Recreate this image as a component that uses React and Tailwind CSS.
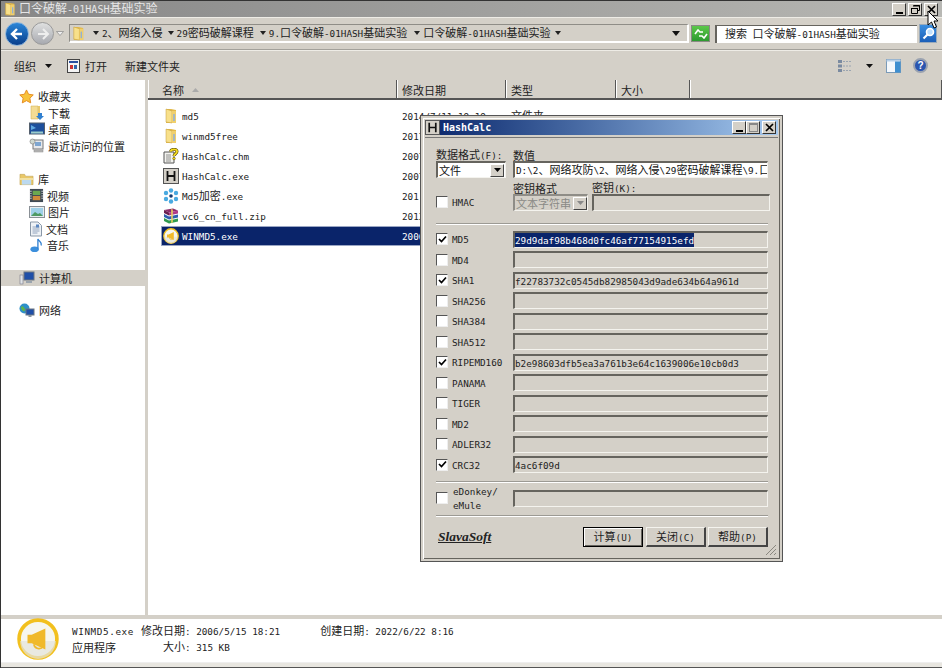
import React from "react";

const T = ({ children, className = "" }) => {
  const parts = String(children).split(/([\u2E80-\uFFFF]+)/).filter(Boolean);
  return (
    <span className={"whitespace-pre leading-[12px] " + className}>
      {parts.map((p, i) =>
        /[\u2E80-\uFFFF]/.test(p) ? (
          <span key={i} className="text-[11px] font-['Noto_Sans_CJK_SC',sans-serif]">{p}</span>
        ) : (
          <span key={i} className="text-[9.3px] font-['DejaVu_Sans_Mono',monospace]">{p}</span>
        )
      )}
    </span>
  );
};

const Folder = ({ s = 16 }) => (
  <svg width={s} height={s} viewBox="0 0 16 16" className="shrink-0">
    <path d="M3 1h5l5 1v13H3z" fill="#e2b94a" />
    <path d="M3 1l6 2v12l-6-1z" fill="#f8e08a" stroke="#c29a38" strokeWidth="0.5" />
    <path d="M9 3h4v12H9z" fill="#f0cf6c" />
    <path d="M11 6v7" stroke="#8fb0d8" strokeWidth="1.5" />
  </svg>
);

const Tri = ({ className = "" }) => (
  <svg width="6" height="4" viewBox="0 0 6 4" className={"shrink-0 " + className}><path d="M0 0h6L3 4z" fill="#222" /></svg>
);

const SideItem = ({ icon, label, deep, className = "" }) => (
  <div className={"flex items-center h-[16.5px] " + (deep ? "pl-[28px] gap-[3px] " : "pl-[18px] gap-[4px] ") + className}>
    {icon}
    <T className="text-[#222]">{label}</T>
  </div>
);

const Star = () => (
  <svg width="15" height="15" viewBox="0 0 16 16"><path d="M8 1l2.200 4.600 5 .7-3.600 3.500.9 5L8 12.400l-4.500 2.400.9-5L.8 6.300l5-.7z" fill="#f8c33c" stroke="#e58a1f" strokeWidth="1" /></svg>
);
const Dl = () => (
  <svg width="16" height="16" viewBox="0 0 16 16"><path d="M2 1h7v13H2z" fill="#f3dc94" stroke="#c9a94f" strokeWidth=".5" /><path d="M9 1h2v13H9z" fill="#e7c86d" /><path d="M9 8h4v3h2l-4 4-4-4h2z" fill="#2f7fd0" /></svg>
);
const Desk = () => (
  <svg width="16" height="14" viewBox="0 0 16 14"><rect x="0.500" y="1" width="15" height="11" fill="#1d4f9c" stroke="#55606e" /><rect x="2" y="9.500" width="12" height="2" fill="#9cc" /><path d="M2 3l5 3-5 2z" fill="#5fa8e0" /></svg>
);
const Recent = () => (
  <svg width="16" height="16" viewBox="0 0 16 16"><rect x="4" y="2" width="10" height="9" fill="#e6e8ea" stroke="#777" /><rect x="6" y="4" width="6" height="4" fill="#7ea6d0" /><rect x="5" y="12" width="9" height="2" fill="#bbb" stroke="#888" strokeWidth=".5" /><circle cx="3.500" cy="3.500" r="2.500" fill="#cfd8cf" stroke="#777" strokeWidth=".6" /></svg>
);
const Lib = () => (
  <svg width="15" height="14" viewBox="0 0 16 14"><path d="M1 2h5l1 2h8v9H1z" fill="#e9c868" stroke="#b8994a" strokeWidth=".5" /><path d="M3 6h10v7H3z" fill="#bcd9ef" /><path d="M1 6h14v2H1z" fill="#f5e2a0" /></svg>
);
const Video = () => (
  <svg width="15" height="15" viewBox="0 0 16 16"><rect x="1" y="1" width="14" height="14" fill="#3f4a55" /><rect x="4" y="3" width="8" height="4.500" fill="#6ba84f" /><rect x="4" y="8.500" width="8" height="4.500" fill="#d08a3a" /><path d="M2 3v10M14 3v10" stroke="#ddd" strokeDasharray="1 1.500" strokeWidth="1.500" /></svg>
);
const Pic = () => (
  <svg width="16" height="14" viewBox="0 0 16 14"><rect x="0.500" y="1.500" width="15" height="11" fill="#e8ecef" stroke="#8a9096" /><rect x="2" y="3" width="12" height="8" fill="#9fd0e8" /><path d="M2 11l4-4 3 2 2-1 3 3z" fill="#4f9a63" /></svg>
);
const Doc = () => (
  <svg width="14" height="16" viewBox="0 0 14 16"><path d="M1.500 1H9l3.500 3.500V15h-11z" fill="#eef2f6" stroke="#8a98a8" /><path d="M3.500 6h7M3.500 8h7M3.500 10h7M3.500 12h5" stroke="#7a90b0" strokeWidth=".8" /><rect x="7" y="3.500" width="3" height="3" fill="#5a86c0" /></svg>
);
const Music = () => (
  <svg width="15" height="16" viewBox="0 0 16 16"><ellipse cx="6" cy="12.500" rx="4.500" ry="3" fill="#3c8fdc" /><path d="M9.500 12V1.500c1 3 4.500 3 3.500 7" fill="none" stroke="#2f7fd0" strokeWidth="1.400" /></svg>
);
const Computer = () => (
  <svg width="16" height="14" viewBox="0 0 16 14"><rect x="5" y="1" width="10" height="8" fill="#1f4fa8" stroke="#6a7480" /><rect x="7" y="10" width="6" height="2" fill="#9aa4ae" /><rect x="1" y="4" width="3" height="9" fill="#e0e4e8" stroke="#778" strokeWidth=".6" /></svg>
);
const Network = () => (
  <svg width="16" height="15" viewBox="0 0 16 15"><circle cx="5.500" cy="5.500" r="5" fill="#2d8fc9" /><path d="M2 4c2-2 3 1 4 2s-1 3-2 2-2-2-2-4z" fill="#5fb54a" /><rect x="7" y="6" width="8" height="6" fill="#1f4fa8" stroke="#6a7480" /><rect x="9.500" y="12" width="3" height="2" fill="#8a96a2" /></svg>
);

const Chm = () => (
  <svg width="16" height="16" viewBox="0 0 16 16" className="shrink-0"><path d="M1 4h10v11H1z" fill="#f3f3ef" stroke="#555" /><path d="M3 7h5M3 9h5M3 11h5M3 13h5" stroke="#777" strokeWidth=".8" /><path d="M7.500 3.500C8 .8 14 .5 14 3.500c0 2.200-3 2.200-3 4.500" fill="none" stroke="#5a4a00" strokeWidth="3" /><path d="M7.500 3.500C8 .8 14 .5 14 3.500c0 2.200-3 2.200-3 4.500" fill="none" stroke="#f5dc20" strokeWidth="1.800" /><circle cx="11" cy="10.500" r="1.300" fill="#f5dc20" stroke="#5a4a00" strokeWidth=".5" /></svg>
);
const HIcon = ({ s = 16 }) => (
  <svg width={s} height={s} viewBox="0 0 16 16" className="shrink-0"><rect x="0.500" y="0.500" width="15" height="15" fill="#d4d0c8" stroke="#555" /><path d="M4.500 3v10M11.500 3v10M4.500 8h7" stroke="#111" strokeWidth="1.800" fill="none" /></svg>
);
const Snow = () => (
  <svg width="16" height="16" viewBox="0 0 16 16" className="shrink-0">
    <g fill="#49a9e0">
      <circle cx="8" cy="2.500" r="2.200" />
      <circle cx="8" cy="13.500" r="2.200" />
      <circle cx="3" cy="5" r="2.200" />
      <circle cx="13" cy="5" r="2.200" />
      <circle cx="3" cy="11" r="2.200" />
      <circle cx="13" cy="11" r="2.200" />
    </g>
    <circle cx="8" cy="8" r="3" fill="#fff" />
    <circle cx="8" cy="8" r="1.800" fill="#123a70" />
  </svg>
);
const Rar = () => (
  <svg width="16" height="16" viewBox="0 0 16 16" className="shrink-0"><path d="M1 2l9-1.500 5 2-9 2z" fill="#8c2a6a" /><path d="M1 2l5 2.500v3L1 5z" fill="#6a1f50" /><path d="M6 4.500l9-2v3l-9 2z" fill="#b03a88" /><path d="M1 6l5 2.500 9-2v3l-9 2-5-2.500z" fill="#2f5fb0" /><path d="M1 10l5 2.500 9-2v3l-9 2-5-2.500z" fill="#2f9a4f" /><path d="M8 1l2 .5v13l-2 .5z" fill="#e8d060" opacity=".8" /></svg>
);
const Winmd = ({ s = 16 }) => (
  <svg width={s} height={s} viewBox="0 0 40 40" className="shrink-0">
    <circle cx="20" cy="20" r="18" fill="#f6f6ee" stroke="#f2c01e" strokeWidth="3.500" />
    <path d="M3 22a17 17 0 0 0 34 0z" fill="#e4e4dc" opacity=".7" />
    <path d="M10 16h4l13-6v20l-13-6h-4z" fill="#f0b92a" />
    <path d="M16 25a5 5 0 0 0 9 2" fill="none" stroke="#f0b92a" strokeWidth="1.500" />
  </svg>
);

const Row = ({ icon, name, date, type, selected }) => (
  <div className={"flex items-center h-5 w-[300px] " + (selected ? "bg-[#0a246a] outline outline-1 -outline-offset-1 outline-[#9aa6c4] text-white" : "text-[#222]")}>
    <div className="flex items-center gap-[3px] w-[241px] shrink-0 pl-[2px]">
      {icon}
      <T>{name}</T>
    </div>
    <div className="w-[109px] shrink-0 -mt-[2px]"><T>{date}</T></div>
    <div className="shrink-0 -mt-[2px]"><T>{type}</T></div>
  </div>
);

const Head = ({ w, children, grow }) => (
  <div className={"flex items-center h-full pl-[5px] pt-px gap-2 border-r border-r-[#555] shadow-[inset_1px_0_0_#fff] " + (grow ? "grow " : "") + w}>
    {children}
  </div>
);

const Check = ({ on }) => (
  <div className="w-[12px] h-[12px] bg-white border-t border-l border-t-[#555] border-l-[#555] border-b border-r border-b-[#eee] border-r-[#eee] flex items-center justify-center shrink-0">
    {on && (
      <svg width="9" height="9" viewBox="0 0 9 9"><path d="M1 4l2.500 2.500L8 1.500" fill="none" stroke="#000" strokeWidth="1.700" /></svg>
    )}
  </div>
);

const Field = ({ children, className = "" }) => (
  <div className={"h-[17px] border-t-2 border-l-2 border-t-[#66645e] border-l-[#66645e] border-b border-r border-b-[#f4f3ee] border-r-[#f4f3ee] bg-[#d4d0c8] flex items-center overflow-hidden text-[#222] " + className}>
    {children}
  </div>
);

const Algo = ({ name, on, value, selected }) => (
  <div className="flex items-center h-[20.500px]">
    <div className="w-[77px] flex items-center gap-[4px]">
      <Check on={on} />
      <T className="text-[#222]">{name}</T>
    </div>
    <Field className="w-[255px]">
      {selected ? <span className="bg-[#0a246a] text-white leading-[14px] flex items-center"><T>{value}</T></span> : value ? <T>{value}</T> : null}
    </Field>
  </div>
);

const Btn = ({ children, active }) => (
  <div className={"h-[20px] w-[60px] flex items-center justify-center bg-[#d4d0c8] " + (active ? "border border-black shadow-[inset_1px_1px_0_#fff,inset_-1px_-1px_0_#66645e]" : "border-t border-l border-t-[#f4f3ee] border-l-[#f4f3ee] border-b-2 border-r-2 border-b-[#444] border-r-[#444]")}>
    <T className="text-[#222]">{children}</T>
  </div>
);

const Sep = () => <div className="h-[2px] border-t border-[#9c9a94] bg-white w-[332px]" />;

const WinBtn = ({ children, className = "" }) => (
  <div className={"w-[14px] h-[13px] flex items-center justify-center bg-[#d4d0c8] border-t border-l border-t-white border-l-white border-b border-r border-b-[#333] border-r-[#333] " + className}>
    {children}
  </div>
);

export default function App() {
  return (
    <div className="relative w-[942px] h-[668px] overflow-hidden flex flex-col bg-[#d4d0c8] border-l border-t border-[#333] font-['DejaVu_Sans_Mono','Noto_Sans_CJK_SC',monospace]">
      {/* title bar */}
      <div className="h-[16px] shrink-0 flex items-center pl-[2px] bg-gradient-to-r from-[#878787] to-[#b8b8b4] gap-[2px]">
        <Folder s={14} />
        <span className="whitespace-pre text-[#e6e6e6] leading-[12px]">
          <span className="text-[12px] font-['Noto_Sans_CJK_SC',sans-serif]">口令破解</span>
          <span className="text-[10.100px] font-['DejaVu_Sans_Mono',monospace]">-01HASH</span>
          <span className="text-[12px] font-['Noto_Sans_CJK_SC',sans-serif]">基础实验</span>
        </span>
        <div className="ml-auto flex gap-[2px] mr-[4px]">
          <WinBtn><div className="w-[7px] h-[2px] bg-black mt-[7px]" /></WinBtn>
          <WinBtn>
            <svg width="9" height="9" viewBox="0 0 9 9"><path d="M2.500 .5h6v5h-2M.5 3.500h6v5h-6z" fill="none" stroke="#000" /><path d="M2 1h7M0 3.500h7" stroke="#000" /></svg>
          </WinBtn>
          <WinBtn>
            <svg width="9" height="9" viewBox="0 0 9 9"><path d="M1 1l7 7M8 1L1 8" stroke="#000" strokeWidth="1.700" /></svg>
          </WinBtn>
        </div>
      </div>
      {/* address bar */}
      <div className="h-[33px] shrink-0 flex items-center pl-[4px] border-t border-[#eeece6] border-b border-b-[#a3a19b]">
        <div className="w-[24px] h-[24px] rounded-full bg-gradient-to-b from-[#2b86d8] to-[#0a3f8c] border border-[#8fb6dc] flex items-center justify-center">
          <svg width="14" height="14" viewBox="0 0 14 14"><path d="M7 2L2 7l5 5M2 7h10" fill="none" stroke="#fff" strokeWidth="2.400" /></svg>
        </div>
        <div className="ml-[2px] w-[23px] h-[23px] rounded-full bg-gradient-to-b from-[#dfe0e0] to-[#a8aab0] border border-[#9a9a9a] flex items-center justify-center">
          <svg width="14" height="14" viewBox="0 0 14 14"><path d="M7 2l5 5-5 5M12 7H2" fill="none" stroke="#eee" strokeWidth="2" /></svg>
        </div>
        <svg width="8" height="5" viewBox="0 0 8 5" className="ml-[2px]"><path d="M.5.5h7L4 4.500z" fill="#eee" stroke="#888" strokeWidth=".7" /></svg>
        <div className="ml-[5px] w-[620px] h-[19px] flex items-center pl-[1px] border-t border-l border-t-[#8f8d87] border-l-[#8f8d87] border-b-2 border-r-2 border-b-white border-r-white">
          <Folder s={15} />
          <div className="flex items-center text-[#222]">
            <Tri className="ml-[7px]" />
            <T className="ml-[3px]">2、网络入侵</T>
            <Tri className="ml-[5px]" />
            <T className="ml-[3px]">29密码破解课程</T>
            <Tri className="ml-[6px]" />
            <T className="ml-[3px]">9.口令破解-01HASH基础实验</T>
            <Tri className="ml-[7px]" />
            <T className="ml-[3px]">口令破解-01HASH基础实验</T>
            <Tri className="ml-[5px]" />
          </div>
          <svg width="8" height="5" viewBox="0 0 8 5" className="ml-auto mr-[7px]"><path d="M0 0h8L4 5z" fill="#111" /></svg>
        </div>
        <div className="w-[19px] h-[17px] ml-[2px] bg-gradient-to-b from-[#5cc84a] to-[#2c9a30] border border-[#8a8a84] flex items-center justify-center">
          <svg width="14" height="10" viewBox="0 0 14 10"><path d="M1 5l3-4 2 2h3M13 5l-3 4-2-2H5" fill="none" stroke="#fff" strokeWidth="1.600" /></svg>
        </div>
        <div className="ml-[5px] w-[202px] h-[18px] bg-white border-l-2 border-t border-l-[#66645e] border-t-[#66645e] flex items-center pl-[8px] text-[#222]">
          <T>搜索 口令破解-01HASH基础实验</T>
        </div>
        <div className="ml-[2px] w-[18px] h-[19px] bg-gradient-to-b from-[#3a8ee0] to-[#1c5fb8] border border-[#9ab] flex items-center justify-center">
          <svg width="13" height="13" viewBox="0 0 13 13"><circle cx="8" cy="5" r="3.500" fill="#bfe0ff" stroke="#fff" strokeWidth="1.600" /><path d="M5.500 7.500L1.500 11.500" stroke="#fff" strokeWidth="2.200" /></svg>
        </div>
      </div>
      {/* toolbar */}
      <div className="h-[30px] shrink-0 flex items-center pl-[13px] text-[#222] border-t border-[#eeece6]">
        <T>组织</T>
        <svg width="7" height="4" viewBox="0 0 7 4" className="ml-[9px]"><path d="M0 0h7L3.500 4z" fill="#111" /></svg>
        <svg width="13" height="14" viewBox="0 0 13 14" className="ml-[15px]"><rect x="0.500" y="0.500" width="12" height="13" fill="#f4f4f4" stroke="#444" /><rect x="2" y="2" width="9" height="2" fill="#2a4fa0" /><rect x="3" y="6" width="3" height="4" fill="#c33" /><rect x="7" y="6" width="3" height="4" fill="#36a" /></svg>
        <T className="ml-[5px]">打开</T>
        <T className="ml-[18px]">新建文件夹</T>
        <div className="ml-auto flex items-center mr-[14px]">
          <svg width="14" height="12" viewBox="0 0 14 12"><g fill="#7a8aa0"><rect x="0" y="0" width="4" height="3" /><rect x="0" y="4.500" width="4" height="3" /><rect x="0" y="9" width="4" height="3" /></g><path d="M5 1.500h9M5 6h9M5 10.500h9" stroke="#9aa4b0" strokeDasharray="2 1" /></svg>
          <svg width="7" height="4" viewBox="0 0 7 4" className="ml-[14px]"><path d="M0 0h7L3.500 4z" fill="#111" /></svg>
          <svg width="15" height="14" viewBox="0 0 15 14" className="ml-[13px]"><rect x="0.500" y="0.500" width="14" height="13" fill="#f4f8fc" stroke="#7a9ab8" /><rect x="0.500" y="0.500" width="14" height="2" fill="#b8d0e8" /><rect x="9" y="2.500" width="5.500" height="11" fill="#3f8fd0" /></svg>
          <div className="ml-[12px] w-[15px] h-[15px] rounded-full bg-[#2a55b0] border-2 border-[#9aa2b0] text-white text-[10px] font-bold flex items-center justify-center font-['Liberation_Sans',sans-serif]">?</div>
        </div>
      </div>
      {/* main */}
      <div className="h-[535px] shrink-0 flex bg-white">
        <div className="w-[144px] shrink-0 pt-[8px] flex flex-col">
          <SideItem icon={<Star />} label="收藏夹" />
          <SideItem deep icon={<Dl />} label="下载" />
          <SideItem deep icon={<Desk />} label="桌面" />
          <SideItem deep icon={<Recent />} label="最近访问的位置" />
          <SideItem icon={<Lib />} label="库" className="mt-[17px]" />
          <SideItem deep icon={<Video />} label="视频" />
          <SideItem deep icon={<Pic />} label="图片" />
          <SideItem deep icon={<Doc />} label="文档" />
          <SideItem deep icon={<Music />} label="音乐" />
          <SideItem icon={<Computer />} label="计算机" className="mt-[16px] bg-[#d4d0c8]" />
          <SideItem icon={<Network />} label="网络" className="mt-[16px]" />
        </div>
        <div className="w-[3px] shrink-0 bg-[#d4d0c8]" />
        <div className="grow flex flex-col min-w-0 overflow-hidden">
          <div className="h-[20px] shrink-0 flex bg-[#d4d0c8] border-b-2 border-[#555] text-[#222]">
            <Head w="w-[249px]">
              <span className="ml-[9px]"><T>名称</T></span>
              <svg width="7" height="4" viewBox="0 0 7 4"><path d="M0 4h7L3.500 0z" fill="#aaa" /></svg>
            </Head>
            <Head w="w-[109px]"><T>修改日期</T></Head>
            <Head w="w-[110px]"><T>类型</T></Head>
            <Head w="w-[74px]"><T>大小</T></Head>
            <Head grow w=""></Head>
          </div>
          <div className="pl-[13px] pt-[6px] flex flex-col">
            <Row icon={<Folder />} name="md5" date="2014/7/11 19:19" type="文件夹" />
            <Row icon={<Folder />} name="winmd5free" date="2017" />
            <Row icon={<Chm />} name="HashCalc.chm" date="2007" />
            <Row icon={<HIcon />} name="HashCalc.exe" date="2007" />
            <Row icon={<Snow />} name="Md5加密.exe" date="201" />
            <Row icon={<Rar />} name="vc6_cn_full.zip" date="2013" />
            <Row selected icon={<Winmd />} name="WINMD5.exe" date="2006" />
          </div>
        </div>
      </div>
      {/* details */}
      <div className="h-[4px] shrink-0 bg-[#d4d0c8]" />
      <div className="h-[44px] shrink-0 bg-white flex items-start pl-[16px] text-[#222] border-b border-[#eee]">
        <div className="mt-[-1px]"><Winmd s={42} /></div>
        <div className="ml-[13px] mt-[4px] flex flex-col">
          <div className="flex items-center h-[16px]">
            <T className="tracking-[0.6px]">WINMD5.exe</T><T className="ml-[7px]">修改日期: 2006/5/15 18:21</T><T className="ml-[40px]">创建日期: 2022/6/22 8:16</T>
          </div>
          <div className="flex items-center h-[16px]">
            <T>应用程序</T><T className="ml-[47px]">大小: 315 KB</T>
          </div>
        </div>
      </div>
      <div className="grow bg-[#e8e6e0] border-b border-[#555]" />

      {/* dialog */}
      <div className="absolute left-[420px] top-[115px] w-[361px] h-[445px] bg-[#d4d0c8] border-2 border-[#d4d0c8] outline outline-1 outline-[#555] shadow-[inset_1px_1px_0_#fff,inset_-1px_-1px_0_#66645e] p-[2px] flex flex-col">
        <div className="h-[15px] shrink-0 flex items-center bg-gradient-to-r from-[#0a246a] to-[#a6caf0]">
          <HIcon s={15} />
          <span className="ml-[3px] text-white font-bold text-[10px] font-['DejaVu_Sans_Mono',monospace]">HashCalc</span>
          <div className="ml-auto flex mr-[2px]">
            <WinBtn><div className="w-[7px] h-[2px] bg-black mt-[7px]" /></WinBtn>
            <WinBtn><div className="w-[9px] h-[9px] border border-[#888] border-t-2" /></WinBtn>
            <WinBtn className="ml-[2px]">
              <svg width="9" height="9" viewBox="0 0 9 9"><path d="M1 1l7 7M8 1L1 8" stroke="#000" strokeWidth="1.700" /></svg>
            </WinBtn>
          </div>
        </div>
        <div className="h-[3px] mt-[2px] border-t border-[#777] shrink-0" />
        <div className="pl-[11px] pt-[8px] flex flex-col grow relative">
          {/* data format and value */}
          <div className="flex gap-[7px]">
            <div className="w-[70px] flex flex-col">
              <div className="h-[13px] flex items-center"><T className="text-[#222]">数据格式(F):</T></div>
              <div className="h-[17px] bg-white border-t-2 border-l-2 border-t-[#66645e] border-l-[#66645e] border-b border-r border-b-[#f4f3ee] border-r-[#f4f3ee] flex items-center pl-[1px] justify-between text-[#111]">
                <T>文件</T>
                <div className="w-[14px] h-[13px] mr-px bg-[#d4d0c8] border border-t-white border-l-white border-b-[#444] border-r-[#444] flex items-center justify-center">
                  <svg width="7" height="4" viewBox="0 0 7 4"><path d="M0 0h7L3.500 4z" fill="#000" /></svg>
                </div>
              </div>
            </div>
            <div className="w-[255px] flex flex-col">
              <div className="h-[13px] flex items-center"><T className="text-[#222] underline">数值</T></div>
              <div className="h-[17px] bg-white border-t-2 border-l-2 border-t-[#66645e] border-l-[#66645e] border-b border-r border-b-[#f4f3ee] border-r-[#f4f3ee] flex items-center pl-[1px] overflow-hidden text-[#111]">
                <T>D:\2、网络攻防\2、网络入侵\29密码破解课程\9.口</T>
              </div>
            </div>
          </div>
          {/* HMAC */}
          <div className="flex mt-[3px] h-[38px]">
            <div className="w-[77px] flex items-center gap-[4px] mt-[4px]">
              <Check />
              <T className="text-[#222]">HMAC</T>
            </div>
            <div className="w-[75px] mr-[4px] flex flex-col">
              <div className="h-[13px] flex items-center"><T className="text-[#222] underline">密钥格式</T></div>
              <div className="h-[17px] w-[75px] bg-[#d4d0c8] border-t-2 border-l-2 border-t-[#8f8d87] border-l-[#8f8d87] border-b border-r border-b-[#f4f3ee] border-r-[#f4f3ee] flex items-center pl-[1px] justify-between">
                <T className="text-[#8a8a86]">文本字符串</T>
                <div className="w-[14px] h-[13px] bg-[#d4d0c8] border border-t-white border-l-white border-b-[#444] border-r-[#444] flex items-center justify-center">
                  <svg width="7" height="4" viewBox="0 0 7 4"><path d="M0 0h7L3.500 4z" fill="#888" /></svg>
                </div>
              </div>
            </div>
            <div className="w-[178px] flex flex-col">
              <div className="h-[13px] flex items-center"><T className="text-[#222]">密钥(K):</T></div>
              <Field className="w-[178px]" />
            </div>
          </div>
          <div className="mt-[4px] mb-[4px]"><Sep /></div>
          <Algo name="MD5" on selected value="29d9daf98b468d0fc46af77154915efd" />
          <Algo name="MD4" />
          <Algo name="SHA1" on value="f22783732c0545db82985043d9ade634b64a961d" />
          <Algo name="SHA256" />
          <Algo name="SHA384" />
          <Algo name="SHA512" />
          <Algo name="RIPEMD160" on value="b2e98603dfb5ea3a761b3e64c1639006e10cb0d3" />
          <Algo name="PANAMA" />
          <Algo name="TIGER" />
          <Algo name="MD2" />
          <Algo name="ADLER32" />
          <Algo name="CRC32" on value="4ac6f09d" />
          <div className="mt-[6px] mb-[2px]"><Sep /></div>
          <div className="flex items-center h-[26px]">
            <div className="w-[77px] flex items-center gap-[5px]">
              <Check />
              <div className="flex flex-col text-[#222]">
                <T>eDonkey/</T>
                <T>eMule</T>
              </div>
            </div>
            <Field className="w-[255px]" />
          </div>
          <div className="mt-[4px]"><Sep /></div>
          <div className="flex items-center mt-[10px] h-[20px] w-[332px]">
            <span className="ml-[2px] text-[13.500px] font-bold italic text-[#222] underline font-['Liberation_Serif',serif]">SlavaSoft</span>
            <div className="ml-auto flex">
              <Btn active>计算(U)</Btn>
              <div className="w-[3px]" />
              <Btn>关闭(C)</Btn>
              <div className="w-[2px]" />
              <Btn>帮助(P)</Btn>
            </div>
          </div>
          <svg width="11" height="11" viewBox="0 0 11 11" className="absolute right-[2px] bottom-[2px]"><path d="M1 11L11 1M5 11L11 5M9 11L11 9" stroke="#8a8880" strokeWidth="1" /></svg>
        </div>
      </div>

      {/* cursor */}
      <svg width="12" height="19" viewBox="0 0 12 19" className="absolute left-[926px] top-[9px]"><path d="M1 1v14l3.500-3 2.500 6 2.500-1-2.500-6H11z" fill="#fff" stroke="#000" /></svg>
    </div>
  );
}
